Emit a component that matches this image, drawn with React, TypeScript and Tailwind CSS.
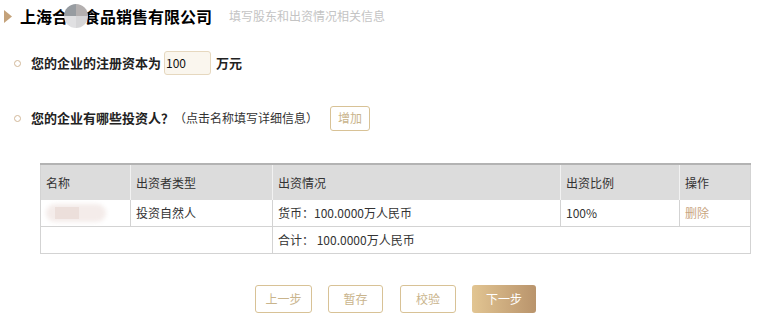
import type { ReactNode } from "react";

const font = { fontFamily: '"Noto Sans CJK SC", "Noto Sans", sans-serif' };

function Dot() {
  return <span className="mr-[10px] inline-block size-[7px] shrink-0 rounded-full border border-[#d2b899]" />;
}

function OutlineBtn({ children, w }: { children: ReactNode; w: string }) {
  return (
    <button
      className={`flex h-[28px] items-center justify-center rounded-[3px] border border-[#d8c296] bg-white text-[12px] text-[#c9b48c] ${w}`}
    >
      {children}
    </button>
  );
}

export default function App() {
  return (
    <div className="h-[317px] w-[765px] bg-white text-[#222]" style={font}>
      {/* title */}
      <div className="flex h-[32px] items-center pl-[4px]">
        <svg width="8" height="13" viewBox="0 0 8 13" className="mr-[8px]">
          <path d="M0 0 L8 6.5 L0 13 Z" fill="#c4a27a" />
        </svg>
        <h1 className="flex items-center text-[16px] leading-none font-bold text-black">
          上海合
          <span className="relative z-10 mx-[-4px] grid size-[24px] grid-cols-2 overflow-hidden rounded-full">
            <span className="bg-[#979ca1]" />
            <span className="bg-[#b4b0b0]" />
            <span className="bg-[#e0e0e2]" />
            <span className="bg-[#d6d6d8]" />
          </span>
          食品销售有限公司
        </h1>
        <span className="ml-[17px] text-[12px] text-[#c4c4c4]">填写股东和出资情况相关信息</span>
      </div>

      {/* capital */}
      <div className="mt-[19px] flex h-[24px] items-center pl-[14px]">
        <Dot />
        <span className="text-[13px] font-bold">您的企业的注册资本为</span>
        <div className="ml-[3px] flex h-[24px] w-[47px] items-center rounded-[3px] border border-[#e6d8bf] bg-[#faf6ee] pl-[1px] text-[12px] text-[#111]">
          100
        </div>
        <span className="ml-[5px] text-[13px] font-bold">万元</span>
      </div>

      {/* investors */}
      <div className="mt-[30px] flex h-[26px] items-center pl-[14px]">
        <Dot />
        <span className="text-[13px] font-bold">您的企业有哪些投资人？</span>
        <span className="text-[12px] text-[#333]">（点击名称填写详细信息）</span>
        <button className="ml-[12px] flex h-[25px] w-[40px] items-center justify-center rounded-[3px] border border-[#d8c296] text-[12px] text-[#c9b48c]">
          增加
        </button>
      </div>

      {/* table */}
      <div className="mt-[32px] pl-[40px]">
        <table className="w-[710px] table-fixed border-collapse border-x border-[#d3d3d3] text-[12px] text-[#333]">
          <colgroup>
            <col className="w-[90px]" />
            <col className="w-[142px]" />
            <col className="w-[288px]" />
            <col className="w-[119px]" />
            <col className="w-[71px]" />
          </colgroup>
          <thead>
            <tr className="h-[36px] border-t-2 border-[#b3b3b3] bg-[#dcdcdc] text-left">
              <th className="pl-[5px] font-normal">名称</th>
              <th className="border-l border-[#f2f2f2] pl-[5px] font-normal">出资者类型</th>
              <th className="border-l border-[#f2f2f2] pl-[5px] font-normal">出资情况</th>
              <th className="border-l border-[#f2f2f2] pl-[5px] font-normal">出资比例</th>
              <th className="border-l border-[#f2f2f2] pl-[5px] font-normal">操作</th>
            </tr>
          </thead>
          <tbody>
            <tr className="h-[26px] border-b border-[#d3d3d3]">
              <td className="relative pl-[5px]">
                <span className="absolute top-[4px] left-[5px] h-[18px] w-[60px] rounded-full bg-[#f4ecea] blur-[2px]" />
                <span className="absolute top-[7px] left-[14px] h-[12px] w-[24px] bg-[#ecdfdb]" />
              </td>
              <td className="border-l border-[#d3d3d3] pl-[5px]">投资自然人</td>
              <td className="border-l border-[#d3d3d3] pl-[5px]">货币：100.0000万人民币</td>
              <td className="border-l border-[#d3d3d3] pl-[5px]">100%</td>
              <td className="border-l border-[#d3d3d3] pl-[5px] text-[#c9a57f]">删除</td>
            </tr>
            <tr className="h-[27px] border-b border-[#d3d3d3]">
              <td colSpan={2} />
              <td colSpan={3} className="border-l border-[#d3d3d3] pl-[5px]">
                合计： 100.0000万人民币
              </td>
            </tr>
          </tbody>
        </table>
      </div>

      {/* actions */}
      <div className="mt-[31px] flex pl-[255px]">
        <OutlineBtn w="w-[57px]">上一步</OutlineBtn>
        <div className="ml-[16px]">
          <OutlineBtn w="w-[55px]">暂存</OutlineBtn>
        </div>
        <div className="ml-[17px]">
          <OutlineBtn w="w-[56px]">校验</OutlineBtn>
        </div>
        <button className="ml-[16px] flex h-[28px] w-[64px] items-center justify-center rounded-[3px] bg-gradient-to-r from-[#e2c592] to-[#b9946c] text-[12px] text-white">
          下一步
        </button>
      </div>
    </div>
  );
}
